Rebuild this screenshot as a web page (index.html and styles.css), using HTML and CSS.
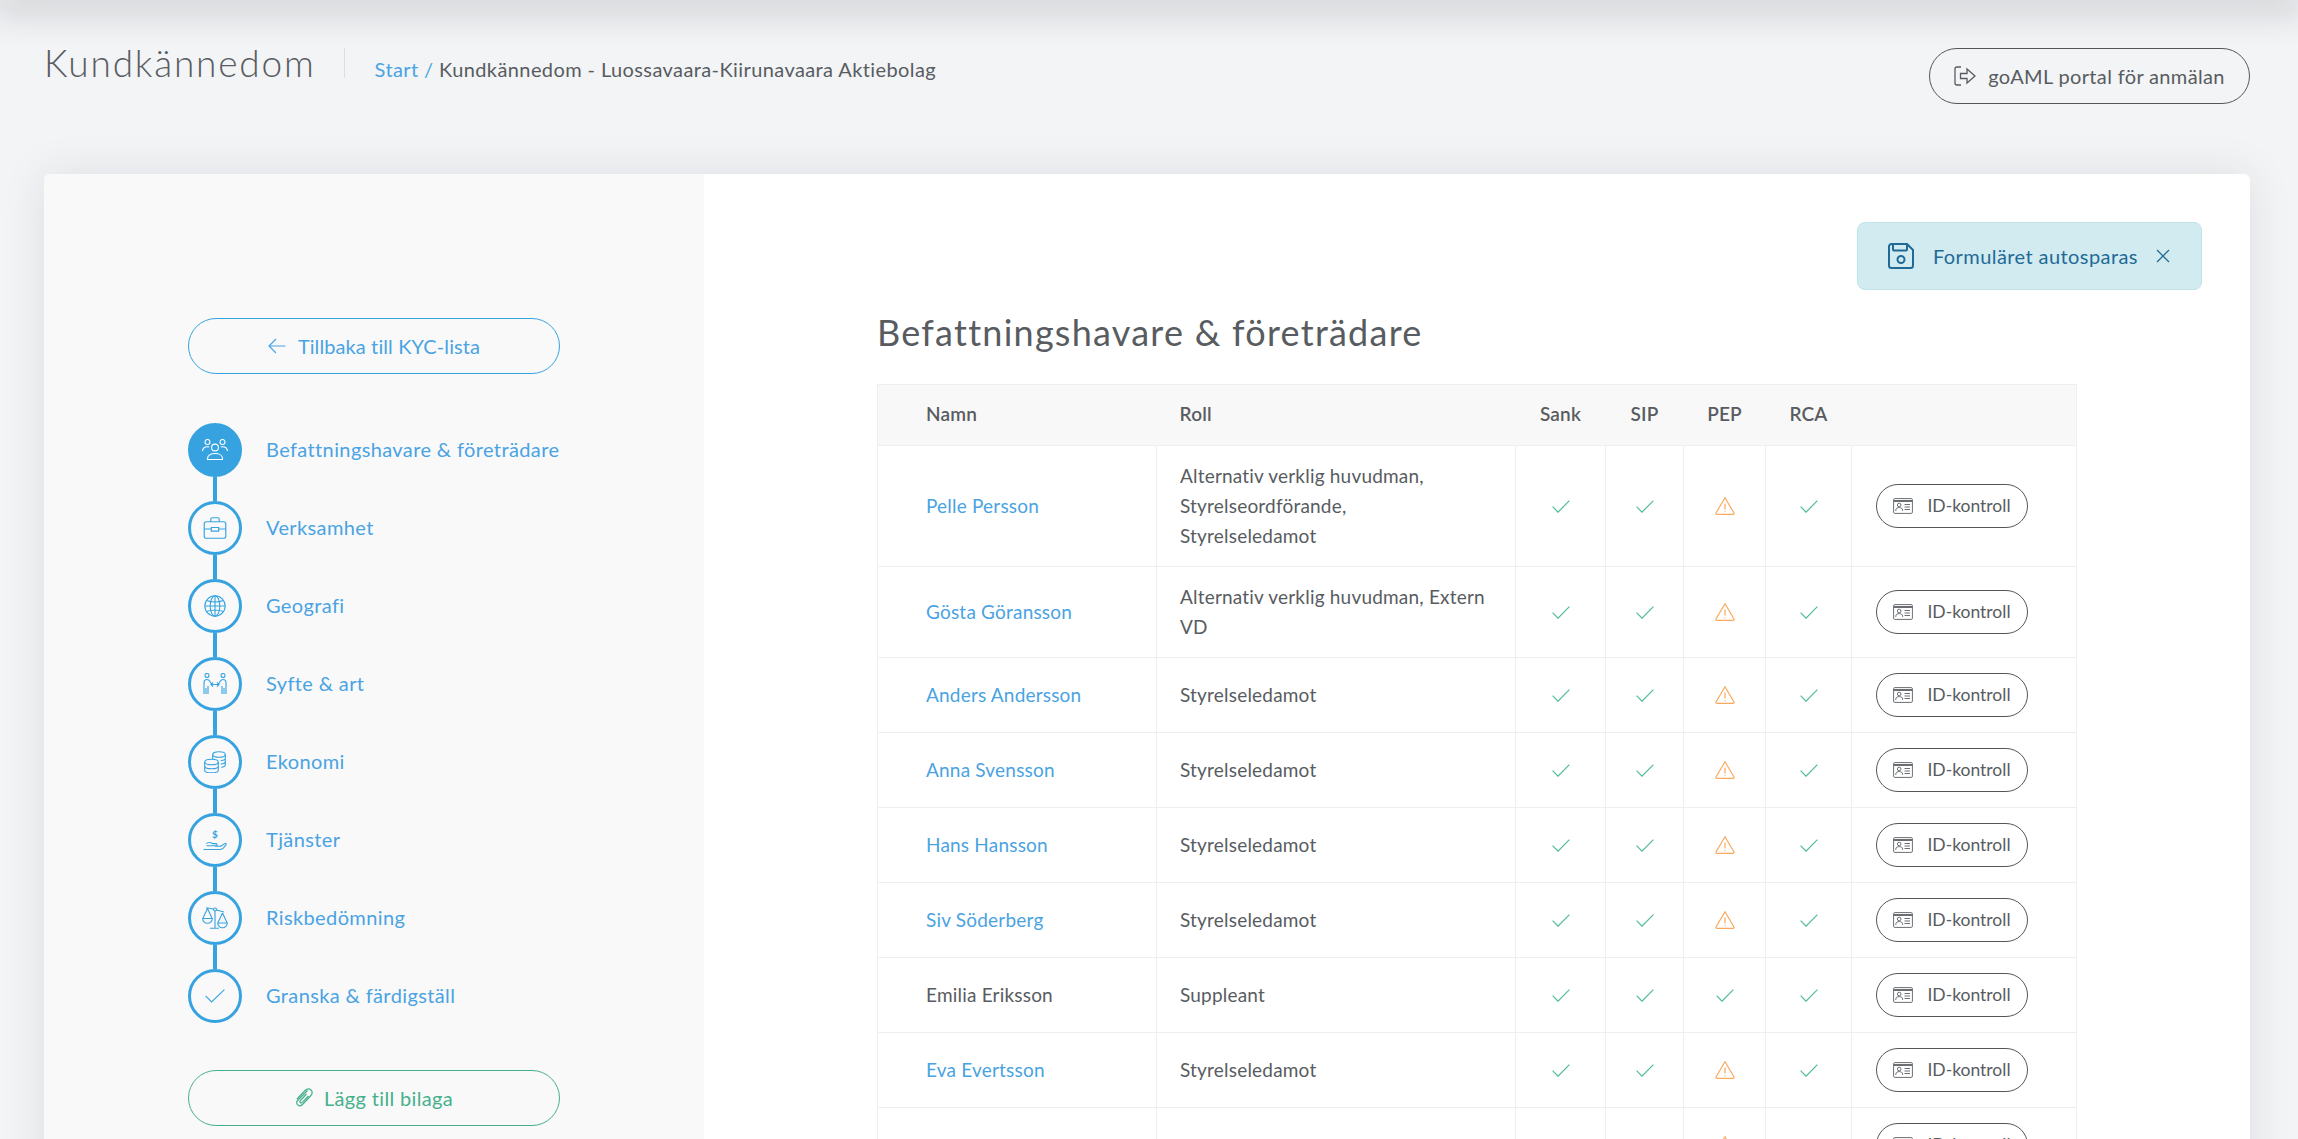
FILE: index.html
```html
<!DOCTYPE html>
<html lang="sv">
<head>
<meta charset="utf-8">
<title>Kundkännedom</title>
<link rel="stylesheet" href="styles.css">
</head>
<body>
<svg class="sprite" width="0" height="0" aria-hidden="true">
  <defs>
    <symbol id="i-check" viewBox="0 0 18 13"><path d="M.6 6.600 6 12.200 17.400.6"/></symbol>
    <symbol id="i-warn" viewBox="0 0 20 18"><path d="M10 .8 19 16a1 1 0 0 1-.9 1.400H1.900A1 1 0 0 1 1 16Z"/><path d="M10 6.500v6M10 14.200v1"/></symbol>
    <symbol id="i-id" viewBox="0 0 20 16"><rect x=".6" y=".6" width="18.800" height="14.800" rx="1.200"/><path d="M.6 3h18.800" stroke-width="2"/><circle cx="6.200" cy="7" r="1.800"/><path d="M2.800 13v-.8c0-1.700 1.400-2.600 3.400-2.600s3.400.9 3.400 2.600v.8M11.500 6.500h5.500M11.500 9h5.500M11.500 11.500h5.500"/></symbol>
  </defs>
</svg>
<div class="page">
  <div class="top-shadow"></div>
  <header class="header">
    <h1 class="title">Kundkännedom</h1>
    <nav class="crumbs"><a class="link" href="#">Start /</a> Kundkännedom - Luossavaara-Kiirunavaara Aktiebolag</nav>
    <a class="pill pill-dark pill-portal" href="#">
      <svg class="ico-portal" viewBox="0 0 22 20"><path d="M7 1H3a2 2 0 0 0-2 2v14a2 2 0 0 0 2 2h4"/><path d="M6.500 7.500h6.500V3l8 7-8 7v-4.500H6.500Z"/></svg>
      goAML portal för anmälan
    </a>
  </header>
  <section class="card">
    <aside class="side">
      <a class="pill pill-blue" href="#">
        <svg class="ico-back" viewBox="0 0 18 16"><path d="M17.500 8H1M8 1 1 8l7 7"/></svg>
        Tillbaka till KYC-lista
      </a>
      <ol class="steps">
        <li class="step is-active">
          <div class="marker">
            <span class="dot"><svg class="ico-step" viewBox="0 0 26 22"><circle cx="13" cy="8.500" r="3.400"/><circle cx="5.500" cy="3" r="2.500"/><circle cx="20.500" cy="3" r="2.500"/><path d="M.5 12c.3-2.800 2.300-4.300 5-4.300.6 0 1.200.1 1.700.3M25.500 12c-.3-2.800-2.300-4.300-5-4.300-.6 0-1.200.1-1.700.3M5.500 20.500v-1c0-3 3.200-5 7.500-5s7.500 2 7.500 5v1Z"/></svg></span>
            <span class="line"></span>
          </div>
          <a class="step-label" href="#">Befattningshavare &amp; företrädare</a>
        </li>
        <li class="step">
          <div class="marker">
            <span class="dot"><svg class="ico-step" viewBox="0 0 22 21"><rect x=".7" y="4.500" width="20.600" height="15.800" rx="2"/><path d="M7 4.500V2a1.300 1.300 0 0 1 1.300-1.300h5.400A1.300 1.300 0 0 1 15 2v2.500M.7 11.500h6.800M14.500 11.500h6.800M7.500 10h7v3.500h-7Z"/></svg></span>
            <span class="line"></span>
          </div>
          <a class="step-label" href="#">Verksamhet</a>
        </li>
        <li class="step">
          <div class="marker">
            <span class="dot"><svg class="ico-step" viewBox="0 0 22 22"><circle cx="11" cy="11" r="10.200"/><ellipse cx="11" cy="11" rx="4.800" ry="10.200"/><path d="M11 .8v20.400M.8 11h20.400M2.500 5.500c5 1.800 12 1.800 17 0M2.500 16.500c5-1.800 12-1.800 17 0"/></svg></span>
            <span class="line"></span>
          </div>
          <a class="step-label" href="#">Geografi</a>
        </li>
        <li class="step">
          <div class="marker">
            <span class="dot"><svg class="ico-step" viewBox="0 0 25 22"><circle cx="4.500" cy="2.500" r="2"/><circle cx="20.500" cy="2.500" r="2"/><path d="M1.500 21V9.500C1.500 7.500 3 6.500 4.500 6.500s2.200.8 3 2l1 2M3.500 21v-6M5.500 21v-8M23.500 21V9.500c0-2-1.500-3-3-3s-2.200.8-3 2l-1 2M21.500 21v-6M19.500 21v-8M8.500 11.500h8M10.500 9.500l-2 2 2 2M14.500 9.500l2 2-2 2"/></svg></span>
            <span class="line"></span>
          </div>
          <a class="step-label" href="#">Syfte &amp; art</a>
        </li>
        <li class="step">
          <div class="marker">
            <span class="dot"><svg class="ico-step" viewBox="0 0 22 22"><ellipse cx="7.500" cy="11" rx="6.800" ry="2.800"/><path d="M.7 11v8.200c0 1.500 3 2.600 6.800 2.600s6.800-1.100 6.800-2.600V11M.7 15c0 1.500 3 2.800 6.800 2.800s6.800-1.300 6.800-2.800"/><ellipse cx="15" cy="3.500" rx="6.300" ry="2.800"/><path d="M8.700 3.500V8M21.300 3.500V14c0 1-1.500 1.900-4 2.300M21.300 7.200c0 1.100-1.800 2.100-4.500 2.400M21.300 10.800c0 1.100-1.800 2-4.500 2.300"/></svg></span>
            <span class="line"></span>
          </div>
          <a class="step-label" href="#">Ekonomi</a>
        </li>
        <li class="step">
          <div class="marker">
            <span class="dot"><svg class="ico-step" viewBox="0 0 24 22"><text class="ico-dollar" x="12" y="9">$</text><path d="M.5 20.500H17c1.500 0 2.500-.6 3.500-1.600l2.600-3.200c.5-.9-.5-1.700-1.400-1.100l-3.200 2.200c-.5.4-1 .5-1.600.5h-5M3.500 16.800h9.500c1.500 0 1.500-2.200 0-2.200H9.500c-1-.9-2-1.300-3.500-1.100-1 .1-1.900.5-2.700 1.200"/></svg></span>
            <span class="line"></span>
          </div>
          <a class="step-label" href="#">Tjänster</a>
        </li>
        <li class="step">
          <div class="marker">
            <span class="dot"><svg class="ico-step" viewBox="0 0 26 22"><circle cx="13" cy="2.500" r="1.500"/><path d="M11.500 2 4 .8M14.500 3l7.500 2M13 4v17M8 21.300h9M5.500 1.500.8 11.500M5.500 1.500l4.700 10M.7 11.500h9.600a4.800 4.800 0 0 1-9.600 0ZM20.500 6l-4.700 10M20.500 6l4.700 10M15.700 16h9.600a4.800 4.800 0 0 1-9.600 0Z"/></svg></span>
            <span class="line"></span>
          </div>
          <a class="step-label" href="#">Riskbedömning</a>
        </li>
        <li class="step">
          <div class="marker">
            <span class="dot"><svg class="ico-step ico-step-check" viewBox="0 0 20 14"><path d="M.6 6.800 6.600 13 19.400.6"/></svg></span>
          </div>
          <a class="step-label" href="#">Granska &amp; färdigställ</a>
        </li>
      </ol>
      <a class="pill pill-green" href="#">
        <svg class="ico-clip" viewBox="0 0 18 20"><path d="M12.500 2.500 3 12c-1.500 1.600-1.500 3.600-.3 4.800 1.200 1.200 3.200 1.200 4.800-.3l8-8.500c1.800-2 2-4.500.5-6C14.500.5 12 .6 10 2.500L2 11M11.500 6 5.500 12.500c-.7.800-.7 1.600-.2 2.100.5.500 1.300.5 2-.2l6.200-6.400"/></svg>
        Lägg till bilaga
      </a>
    </aside>
    <main class="main">
      <div class="notice-row">
        <div class="notice">
          <svg class="ico-save" viewBox="0 0 26 26"><path d="M3.500 1h15.500l6 6v15.500a2.500 2.500 0 0 1-2.500 2.500h-19A2.500 2.500 0 0 1 1 22.500v-19A2.500 2.500 0 0 1 3.500 1Z"/><path d="M5 1v5.500a1 1 0 0 0 1 1h12a1 1 0 0 0 1-1V1"/><circle cx="13" cy="16.500" r="3.500"/></svg>
          <span class="notice-text">Formuläret autosparas</span>
          <svg class="ico-x" viewBox="0 0 14 14"><path d="M1 1l12 12M13 1 1 13"/></svg>
        </div>
      </div>
      <div class="content">
        <h2 class="heading">Befattningshavare &amp; företrädare</h2>
        <table class="kyc">
          <colgroup><col class="c-name"><col class="c-role"><col class="c-sank"><col class="c-sip"><col class="c-pep"><col class="c-rca"><col class="c-act"></colgroup>
          <thead>
            <tr><th class="name">Namn</th><th class="role">Roll</th><th>Sank</th><th>SIP</th><th>PEP</th><th>RCA</th><th></th></tr>
          </thead>
          <tbody>
            <tr class="r3"><td class="name"><a class="link" href="#">Pelle Persson</a></td><td class="role">Alternativ verklig huvudman, Styrelseordförande, Styrelseledamot</td><td><svg class="ok"><use href="#i-check"/></svg></td><td><svg class="ok"><use href="#i-check"/></svg></td><td><svg class="warn"><use href="#i-warn"/></svg></td><td><svg class="ok"><use href="#i-check"/></svg></td><td><a class="pill pill-dark pill-id" href="#"><svg class="ico-id"><use href="#i-id"/></svg>ID-kontroll</a></td></tr>
            <tr class="r2"><td class="name"><a class="link" href="#">Gösta Göransson</a></td><td class="role">Alternativ verklig huvudman, Extern VD</td><td><svg class="ok"><use href="#i-check"/></svg></td><td><svg class="ok"><use href="#i-check"/></svg></td><td><svg class="warn"><use href="#i-warn"/></svg></td><td><svg class="ok"><use href="#i-check"/></svg></td><td><a class="pill pill-dark pill-id" href="#"><svg class="ico-id"><use href="#i-id"/></svg>ID-kontroll</a></td></tr>
            <tr><td class="name"><a class="link" href="#">Anders Andersson</a></td><td class="role">Styrelseledamot</td><td><svg class="ok"><use href="#i-check"/></svg></td><td><svg class="ok"><use href="#i-check"/></svg></td><td><svg class="warn"><use href="#i-warn"/></svg></td><td><svg class="ok"><use href="#i-check"/></svg></td><td><a class="pill pill-dark pill-id" href="#"><svg class="ico-id"><use href="#i-id"/></svg>ID-kontroll</a></td></tr>
            <tr><td class="name"><a class="link" href="#">Anna Svensson</a></td><td class="role">Styrelseledamot</td><td><svg class="ok"><use href="#i-check"/></svg></td><td><svg class="ok"><use href="#i-check"/></svg></td><td><svg class="warn"><use href="#i-warn"/></svg></td><td><svg class="ok"><use href="#i-check"/></svg></td><td><a class="pill pill-dark pill-id" href="#"><svg class="ico-id"><use href="#i-id"/></svg>ID-kontroll</a></td></tr>
            <tr><td class="name"><a class="link" href="#">Hans Hansson</a></td><td class="role">Styrelseledamot</td><td><svg class="ok"><use href="#i-check"/></svg></td><td><svg class="ok"><use href="#i-check"/></svg></td><td><svg class="warn"><use href="#i-warn"/></svg></td><td><svg class="ok"><use href="#i-check"/></svg></td><td><a class="pill pill-dark pill-id" href="#"><svg class="ico-id"><use href="#i-id"/></svg>ID-kontroll</a></td></tr>
            <tr><td class="name"><a class="link" href="#">Siv Söderberg</a></td><td class="role">Styrelseledamot</td><td><svg class="ok"><use href="#i-check"/></svg></td><td><svg class="ok"><use href="#i-check"/></svg></td><td><svg class="warn"><use href="#i-warn"/></svg></td><td><svg class="ok"><use href="#i-check"/></svg></td><td><a class="pill pill-dark pill-id" href="#"><svg class="ico-id"><use href="#i-id"/></svg>ID-kontroll</a></td></tr>
            <tr><td class="name">Emilia Eriksson</td><td class="role">Suppleant</td><td><svg class="ok"><use href="#i-check"/></svg></td><td><svg class="ok"><use href="#i-check"/></svg></td><td><svg class="ok"><use href="#i-check"/></svg></td><td><svg class="ok"><use href="#i-check"/></svg></td><td><a class="pill pill-dark pill-id" href="#"><svg class="ico-id"><use href="#i-id"/></svg>ID-kontroll</a></td></tr>
            <tr><td class="name"><a class="link" href="#">Eva Evertsson</a></td><td class="role">Styrelseledamot</td><td><svg class="ok"><use href="#i-check"/></svg></td><td><svg class="ok"><use href="#i-check"/></svg></td><td><svg class="warn"><use href="#i-warn"/></svg></td><td><svg class="ok"><use href="#i-check"/></svg></td><td><a class="pill pill-dark pill-id" href="#"><svg class="ico-id"><use href="#i-id"/></svg>ID-kontroll</a></td></tr>
            <tr><td class="name"></td><td class="role"></td><td><svg class="ok"><use href="#i-check"/></svg></td><td><svg class="ok"><use href="#i-check"/></svg></td><td><svg class="warn"><use href="#i-warn"/></svg></td><td><svg class="ok"><use href="#i-check"/></svg></td><td><a class="pill pill-dark pill-id" href="#"><svg class="ico-id"><use href="#i-id"/></svg>ID-kontroll</a></td></tr>
          </tbody>
        </table>
      </div>
    </main>
  </section>
</div>
</body>
</html>
```

FILE: styles.css
```css
* { box-sizing: border-box; }
html, body { margin: 0; height: 100%; overflow: hidden; }
body {
  font-family: "Lato", "Liberation Sans", sans-serif;
  color: #585c61;
  background: #f3f4f6;
}
a { text-decoration: none; color: inherit; }
.sprite { display: block; }
svg { fill: none; stroke: currentColor; flex: none; }
.link { color: #4aa3e2; }

.page { height: 100vh; overflow: hidden; padding: 0 48px 0 44px; }
.top-shadow { height: 0; margin: 0 -48px 0 -44px; box-shadow: 0 0 36px 8px rgba(30, 35, 45, .3); }

.header { display: flex; align-items: flex-start; height: 174px; padding-top: 48px; }
.title {
  margin: 0;
  padding-right: 28px;
  height: 30px;
  font-size: 37px;
  line-height: 30px;
  font-weight: 300;
  letter-spacing: 1.8px;
  border-right: 1px solid #dcdee1;
}
.crumbs { margin-left: 30px; padding-top: 9px; font-size: 20px; line-height: 24px; letter-spacing: .4px; }

.pill {
  display: flex;
  align-items: center;
  justify-content: center;
  border: 1px solid;
  border-radius: 30px;
}
.pill-dark { color: #585c61; border-color: #53575c; }
.pill-portal { margin-left: auto; width: 321px; height: 56px; gap: 12px; font-size: 20px; letter-spacing: .35px; }
.ico-portal { width: 22px; height: 20px; stroke-width: 1.3; }

.card {
  display: flex;
  height: 1200px;
  background: #fff;
  border-radius: 6px;
  box-shadow: 0 0 44px rgba(30, 35, 45, .1);
  overflow: hidden;
}
.side {
  width: 660px;
  flex: none;
  padding: 144px 0 0 144px;
  background: #f9f9fa;
}
.side .pill { width: 372px; height: 56px; font-size: 20px; letter-spacing: .35px; }
.side .pill-blue { gap: 12px; letter-spacing: .1px; }
.pill-blue { color: #4aa3e2; border-color: #36a3e0; }
.pill-green { color: #46b08b; border-color: #46b08b; gap: 11px; }
.ico-back { width: 18px; height: 16px; stroke-width: 1.2; }
.ico-clip { width: 18px; height: 20px; stroke-width: 1.2; }

.steps { list-style: none; margin: 49px 0 47px; padding: 0; }
.step { display: flex; gap: 24px; }
.marker { display: flex; flex-direction: column; align-items: center; width: 54px; }
.dot {
  display: flex;
  align-items: center;
  justify-content: center;
  width: 54px;
  height: 54px;
  border: 3.500px solid #36a3e0;
  border-radius: 50%;
  color: #36a3e0;
}
.is-active .dot { background: #36a3e0; color: #fff; }
.line { width: 3.500px; height: 24px; background: #36a3e0; }
.ico-step { width: 26px; height: 22px; stroke-width: 1.1; }
.ico-step-check { width: 20px; height: 14px; }
.ico-dollar { font-size: 10px; font-weight: 700; text-anchor: middle; fill: currentColor; stroke: none; font-family: "Lato", sans-serif; }
.step-label { color: #4aa3e2; font-size: 20px; line-height: 52px; letter-spacing: .38px; white-space: nowrap; height: 54px; }

.main { flex: 1; min-width: 0; padding: 48px 48px 0; }
.notice-row { display: flex; justify-content: flex-end; }
.notice {
  display: flex;
  align-items: center;
  width: 345px;
  height: 68px;
  padding-left: 30px;
  gap: 19px;
  background: #d1ebf0;
  border: 1px solid #bfe4ea;
  border-radius: 8px;
  color: #1f6a96;
}
.notice-text { font-size: 20px; letter-spacing: .42px; white-space: nowrap; }
.ico-save { width: 26px; height: 26px; stroke-width: 2; }
.ico-x { width: 14px; height: 14px; margin-left: -1px; stroke-width: 1.3; }

.content { margin: 0 125px; }
.heading { margin: 0; height: 94px; padding-top: 17px; font-size: 36px; line-height: 50px; font-weight: 400; letter-spacing: 1.25px; }

.kyc { width: 1199px; table-layout: fixed; border-collapse: collapse; font-size: 19px; letter-spacing: .2px; }
.c-name { width: 279px; } .c-role { width: 359px; } .c-sank { width: 90px; } .c-sip { width: 78px; } .c-pep { width: 82px; } .c-rca { width: 86px; } .c-act { width: 225px; }
.kyc th, .kyc td { border: 1px solid #eeeff0; padding: 0 8px; text-align: center; line-height: 30px; }
.kyc thead tr { height: 61px; background: #f8f8f8; }
.kyc th { font-weight: 600; border-left: 0; border-right: 0; padding-bottom: 2px; }
.kyc th:first-child { border-left: 1px solid #eeeff0; }
.kyc th:last-child { border-right: 1px solid #eeeff0; }
.kyc tbody tr { height: 75px; }
.kyc .r3 { height: 121px; }
.kyc .r2 { height: 91px; }
.kyc .name { text-align: left; padding-left: 48px; }
.kyc .role { text-align: left; padding-left: 23px; padding-right: 30px; }
.kyc td svg.ok, .kyc td svg.warn { display: block; margin: 0 auto; }
.ok { width: 18px; height: 13px; color: #4fbb97; stroke-width: 1.2; }
.warn { width: 20px; height: 18px; color: #f9a85c; stroke-width: 1.2; }
.pill-id { width: 152px; height: 44px; margin-left: 16px; gap: 14px; font-size: 17.500px; letter-spacing: 0; }
.ico-id { width: 20px; height: 16px; color: #6b6f74; stroke-width: 1; }
```
